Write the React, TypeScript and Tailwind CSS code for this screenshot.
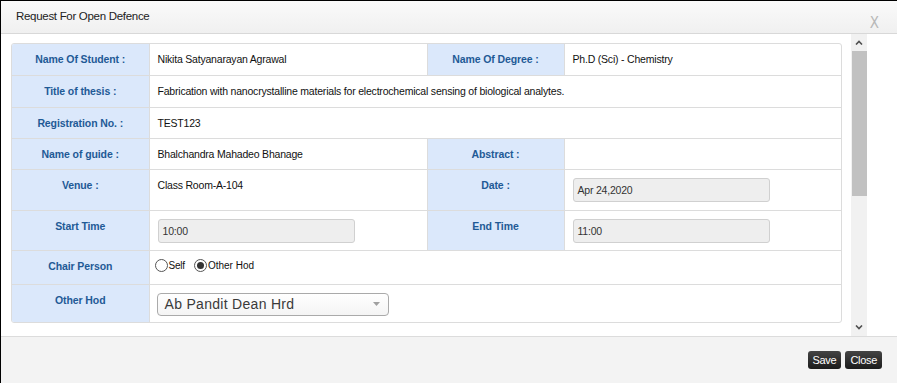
import React from 'react';

const font = "font-['Liberation_Sans',Arial,sans-serif]";

const Label: React.FC<{ children: React.ReactNode }> = ({ children }) => (
  <td className="w-[137px] bg-[#dbe8fb] border border-[#dcdcdc] px-2 pt-[8px] pb-0 align-top text-center text-[10.5px] tracking-[-0.1px] leading-[14px] font-bold text-[#1f5a96]">
    {children}
  </td>
);

const Value: React.FC<{ children?: React.ReactNode; span?: number }> = ({ children, span }) => (
  <td colSpan={span} className="border border-[#dcdcdc] px-[8px] pt-[8px] pb-0 align-top text-[10.5px] tracking-[-0.2px] leading-[14px] text-[#111]">
    {children}
  </td>
);

const ReadOnlyInput: React.FC<{ value: string }> = ({ value }) => (
  <div className="w-[197px] h-[24px] rounded-[3px] border border-[#d0d0d0] bg-[#eeeeee] px-[4px] flex items-center text-[10.5px] text-[#333]">
    {value}
  </div>
);

const Radio: React.FC<{ checked?: boolean }> = ({ checked }) => (
  <span className="inline-flex w-[13px] h-[13px] rounded-full border border-[#555] bg-white items-center justify-center">
    {checked && <span className="w-[7px] h-[7px] rounded-full bg-[#333]" />}
  </span>
);

const App: React.FC = () => {
  return (
    <div className={`w-[897px] h-[383px] flex flex-col bg-white border-t border-l border-black ${font}`}>
      {/* header */}
      <div className="h-[33px] shrink-0 flex items-center justify-between pl-[15px] pr-[18px] bg-gradient-to-b from-[#fafafa] to-[#f0f0f0] border-b border-[#d8d8d8]">
        <span className="text-[11.5px] tracking-[-0.3px] text-[#222] -mt-[1px]">Request For Open Defence</span>
        <span className="text-[15px] text-[#b8b8b8] mt-[12px] font-['DejaVu_Sans_Condensed','DejaVu_Sans',sans-serif] font-light">X</span>
      </div>

      {/* body */}
      <div className="flex-1 flex min-h-0">
        <div className="w-[850px] overflow-hidden pt-[9px] pl-[10px] pr-[9px]">
          <div className="rounded-[3px] border border-[#dcdcdc] overflow-hidden">
            <table className="w-full border-collapse border-hidden table-fixed">
              <colgroup>
                <col className="w-[137px]" />
                <col className="w-[278px]" />
                <col className="w-[137px]" />
                <col />
              </colgroup>
              <tbody>
                <tr className="h-[31px]">
                  <Label>Name Of Student :</Label>
                  <Value>Nikita Satyanarayan Agrawal</Value>
                  <Label>Name Of Degree :</Label>
                  <Value>Ph.D (Sci) - Chemistry</Value>
                </tr>
                <tr className="h-[32px]">
                  <Label>Title of thesis :</Label>
                  <Value span={3}>Fabrication with nanocrystalline materials for electrochemical sensing of biological analytes.</Value>
                </tr>
                <tr className="h-[31px]">
                  <Label>Registration No. :</Label>
                  <Value span={3}>TEST123</Value>
                </tr>
                <tr className="h-[31px]">
                  <Label>Name of guide :</Label>
                  <Value>Bhalchandra Mahadeo Bhanage</Value>
                  <Label>Abstract :</Label>
                  <Value />
                </tr>
                <tr className="h-[41px]">
                  <Label>Venue :</Label>
                  <Value>Class Room-A-104</Value>
                  <Label>Date :</Label>
                  <Value>
                    <ReadOnlyInput value="Apr 24,2020" />
                  </Value>
                </tr>
                <tr className="h-[40px]">
                  <Label>Start Time</Label>
                  <Value>
                    <ReadOnlyInput value="10:00" />
                  </Value>
                  <Label>End Time</Label>
                  <Value>
                    <ReadOnlyInput value="11:00" />
                  </Value>
                </tr>
                <tr className="h-[34px]">
                  <Label>Chair Person</Label>
                  <Value span={3}>
                    <div className="flex items-center -ml-[3px] text-[10px] tracking-[-0.2px]">
                      <Radio />
                      <span className="ml-[1px]">Self</span>
                      <span className="ml-[9px]"><Radio checked /></span>
                      <span className="ml-[1px] tracking-[0px]">Other Hod</span>
                    </div>
                  </Value>
                </tr>
                <tr className="h-[38px]">
                  <Label>Other Hod</Label>
                  <Value span={3}>
                    <div className="w-[232px] h-[23px] -ml-[1px] rounded-[4px] border border-[#aaaaaa] bg-gradient-to-b from-white to-[#f4f4f4] flex items-center justify-between pl-[7px] pr-[8px]">
                      <span className="text-[14px] tracking-[0.3px] text-[#3a3a3a]">Ab Pandit Dean Hrd</span>
                      <svg width="7" height="4" viewBox="0 0 7 4"><path d="M0 0h7L3.5 4z" fill="#a0a0a0" /></svg>
                    </div>
                  </Value>
                </tr>
              </tbody>
            </table>
          </div>
        </div>

        {/* scrollbar */}
        <div className="w-[16px] bg-[#f1f1f1] flex flex-col items-center">
          <div className="h-[17px] flex items-center justify-center">
            <svg width="8" height="5" viewBox="0 0 8 5"><path d="M1 4.5L4 1.5l3 3" stroke="#505050" strokeWidth="1.6" fill="none" /></svg>
          </div>
          <div className="w-[15px] h-[145px] bg-[#c1c1c1]" />
          <div className="flex-1" />
          <div className="h-[17px] flex items-center justify-center">
            <svg width="8" height="5" viewBox="0 0 8 5"><path d="M1 0.5L4 3.5l3-3" stroke="#505050" strokeWidth="1.6" fill="none" /></svg>
          </div>
        </div>
        <div className="flex-1" />
      </div>

      {/* footer */}
      <div className="h-[47px] shrink-0 bg-[#f3f3f3] border-t border-[#dcdcdc] flex items-start justify-end gap-[4px] pr-[15px] pt-[14px]">
        <button className="h-[18px] px-[5px] rounded-[3px] bg-gradient-to-b from-[#444] to-[#1c1c1c] text-white text-[11px] tracking-[-0.3px] leading-none">Save</button>
        <button className="h-[18px] px-[5px] rounded-[3px] bg-gradient-to-b from-[#444] to-[#1c1c1c] text-white text-[11px] tracking-[-0.3px] leading-none">Close</button>
      </div>
    </div>
  );
};

export default App;
